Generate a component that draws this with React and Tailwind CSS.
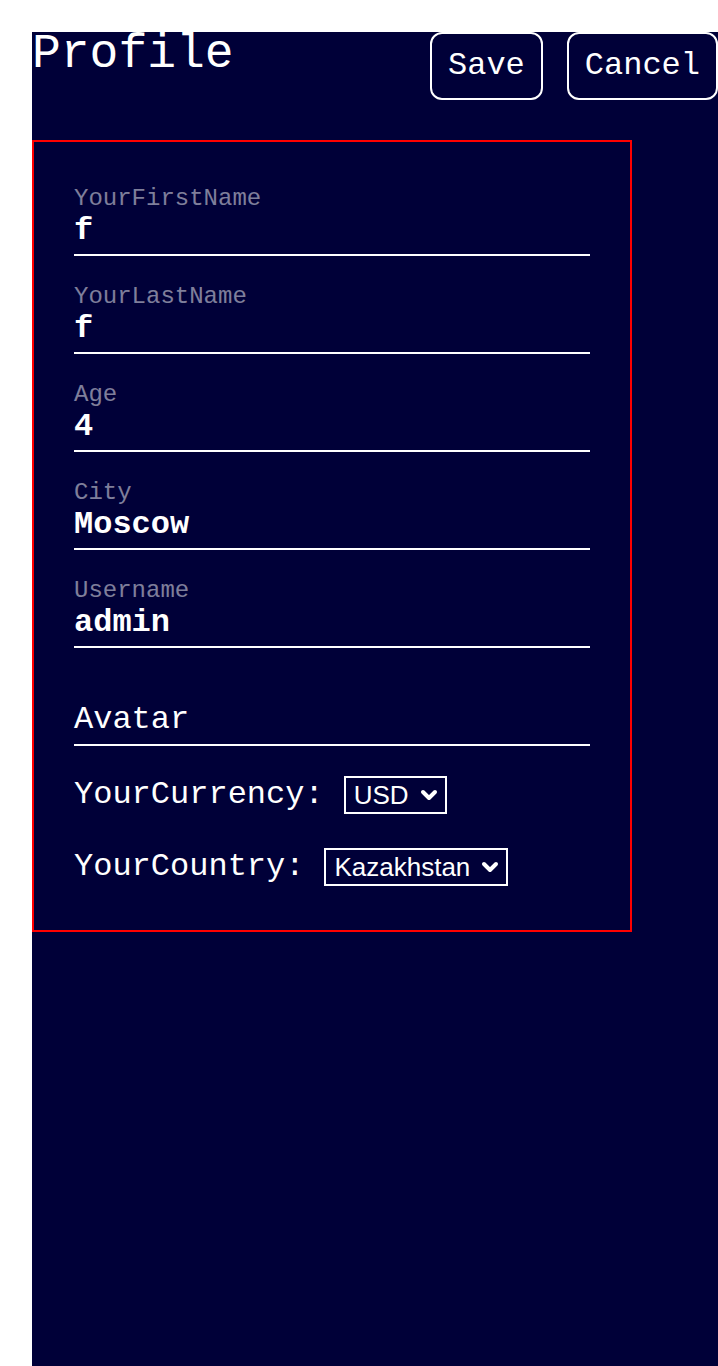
import React from "react";

const mono = { fontFamily: '"Liberation Mono", "DejaVu Sans Mono", monospace' };
const sans = { fontFamily: '"Liberation Sans", Arial, sans-serif' };

function Field({ label, value }) {
  return (
    <div className="flex flex-col mb-6">
      <div className="pt-[3px] text-[24px] leading-[28px] text-white/50">{label}</div>
      <div className="h-[43px] pb-[5px] border-b-2 border-white text-[32px] leading-[36px] font-bold text-white">
        {value}
      </div>
    </div>
  );
}

function Select({ value, options }) {
  return (
    <div className="relative h-[38px] border-2 border-white flex items-center">
      <select
        defaultValue={value}
        className="appearance-none h-full pl-[8px] pr-[36px] text-[26px] leading-[30px] text-white outline-none"
        style={sans}
      >
        {options.map((o) => (
          <option key={o} className="text-black">{o}</option>
        ))}
      </select>
      <svg
        className="absolute right-[6px] top-1/2 -translate-y-1/2 pointer-events-none"
        width="20"
        height="14"
        viewBox="0 0 20 14"
      >
        <path d="M4 4 L10 10 L16 4" fill="none" stroke="white" strokeWidth="4" strokeLinecap="round" strokeLinejoin="round" />
      </svg>
    </div>
  );
}

export default function App() {
  return (
    <div className="min-h-screen bg-white pl-8 pt-8 flex" style={mono}>
      <div className="flex-1 bg-[#000038] text-white">
        <div className="flex justify-between items-start">
          <h1 className="text-[48px] leading-[44px] font-normal">Profile</h1>
          <div className="flex gap-6">
            <button className="border-2 border-white rounded-xl px-4 py-[14px] text-[32px] leading-[36px]">
              Save
            </button>
            <button className="border-2 border-white rounded-xl px-4 py-[14px] text-[32px] leading-[36px]">
              Cancel
            </button>
          </div>
        </div>

        <div className="mt-10 w-[600px] border-2 border-[#ff0000] px-10 pt-10 pb-[42px]">
          <Field label="YourFirstName" value="f" />
          <Field label="YourLastName" value="f" />
          <Field label="Age" value="4" />
          <Field label="City" value="Moscow" />
          <Field label="Username" value="admin" />
          <div className="flex flex-col">
            <div className="h-[30px]" />
            <div className="h-[44px] pb-[6px] border-b-2 border-white text-[32px] leading-[36px] text-white">
              Avatar
            </div>
          </div>

          <div className="mt-[28px] h-[42px] flex items-center gap-[20px]">
            <span className="text-[32px] leading-[36px]">YourCurrency:</span>
            <Select value="USD" options={["USD", "EUR", "RUB"]} />
          </div>

          <div className="mt-[30px] h-[42px] flex items-center gap-[20px]">
            <span className="text-[32px] leading-[36px]">YourCountry:</span>
            <Select value="Kazakhstan" options={["Russia", "Kazakhstan", "Ukraine"]} />
          </div>
        </div>
      </div>
    </div>
  );
}
